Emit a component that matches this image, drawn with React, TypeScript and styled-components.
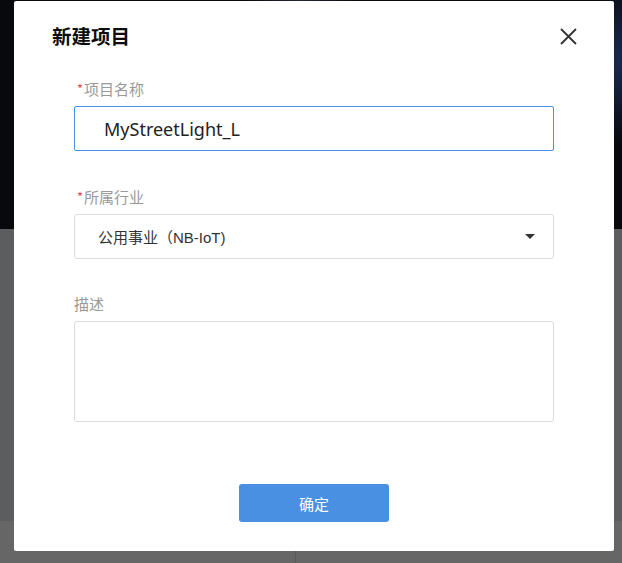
import React from "react";
import styled, { createGlobalStyle } from "styled-components";

const Global = createGlobalStyle`
  html, body { margin: 0; padding: 0; }
  body {
    width: 622px;
    height: 563px;
    overflow: hidden;
    font-family: "Noto Sans", "Noto Sans CJK SC", sans-serif;
  }
  * { box-sizing: border-box; }
`;

const Page = styled.div`
  position: relative;
  width: 622px;
  height: 563px;
  display: flex;
  flex-direction: column;
  background: #5c5d5f;
`;

const Banner = styled.div`
  height: 229px;
  background:
    radial-gradient(ellipse 40px 120px at 618px 60px, rgba(40, 70, 140, 0.55), transparent 70%),
    radial-gradient(ellipse 80px 40px at 300px 4px, rgba(90, 100, 120, 0.35), transparent 70%),
    #07090d;
`;

const Middle = styled.div`
  flex: 1;
  background: #5c5d5f;
`;

const BottomBar = styled.div`
  height: 42px;
  display: grid;
  grid-template-columns: 296px 1fr;
  background: #666667;
`;

const BarCell = styled.div<{ $divider?: boolean }>`
  border-right: ${(p) => (p.$divider ? "1px solid #58595a" : "none")};
`;

const Modal = styled.div`
  position: absolute;
  left: 14px;
  top: 1px;
  width: 600px;
  height: 550px;
  background: #ffffff;
  border-radius: 2px;
  padding: 20px 38px 0 38px;
  display: flex;
  flex-direction: column;
`;

const Header = styled.div`
  height: 30px;
  display: flex;
  align-items: center;
  justify-content: space-between;
`;

const Title = styled.h2`
  margin: 0;
  font-family: "Noto Sans CJK SC", sans-serif;
  font-size: 19.5px;
  font-weight: 700;
  color: #0d0d0d;
  line-height: 30px;
`;

const CloseButton = styled.button`
  width: 20px;
  height: 20px;
  padding: 0;
  margin-right: -2px;
  border: none;
  background: transparent;
  display: flex;
  align-items: center;
  justify-content: center;
  cursor: pointer;
`;

const Form = styled.div`
  margin-top: 28px;
  padding: 0 22px;
  display: flex;
  flex-direction: column;
`;

const Label = styled.div<{ $gap?: number; $indent?: number }>`
  margin-top: ${(p) => p.$gap ?? 0}px;
  margin-bottom: 7px;
  padding-left: ${(p) => p.$indent ?? 3}px;
  height: 20px;
  line-height: 20px;
  font-family: "Noto Sans CJK SC", sans-serif;
  font-size: 15px;
  color: #999;
`;

const Star = styled.span`
  color: #e5484d;
  font-size: 13px;
  margin-right: 1px;
  vertical-align: 1px;
`;

const TextInput = styled.div`
  height: 45px;
  border: 1px solid #4a90e2;
  border-radius: 2px;
  padding-left: 29px;
  display: flex;
  align-items: center;
  font-family: "Noto Sans", "Noto Sans CJK SC", sans-serif;
  font-size: 18px;
  color: #222;
`;

const Select = styled.div`
  height: 45px;
  border: 1px solid #dcdcdc;
  border-radius: 3px;
  padding: 0 18px 0 23px;
  display: flex;
  align-items: center;
  justify-content: space-between;
  font-family: "Liberation Sans", "Noto Sans CJK SC", sans-serif;
  font-size: 15px;
  color: #333;
`;

const Caret = styled.span`
  width: 0;
  height: 0;
  border-left: 5px solid transparent;
  border-right: 5px solid transparent;
  border-top: 5px solid #333;
`;

const TextArea = styled.div`
  height: 101px;
  border: 1px solid #dcdcdc;
  border-radius: 3px;
`;

const Footer = styled.div`
  margin-top: 62px;
  display: flex;
  justify-content: center;
`;

const Confirm = styled.button`
  width: 150px;
  height: 38px;
  border: none;
  border-radius: 3px;
  background: #4a90e2;
  color: #fff;
  font-family: "Noto Sans CJK SC", sans-serif;
  font-size: 15px;
  cursor: pointer;
`;

export default function App() {
  return (
    <>
      <Global />
      <Page>
        <Banner />
        <Middle />
        <BottomBar>
          <BarCell $divider />
          <BarCell />
        </BottomBar>
        <Modal>
          <Header>
            <Title>新建项目</Title>
            <CloseButton aria-label="close">
              <svg width="17" height="17" viewBox="0 0 17 17">
                <path d="M1 1 L16 16 M16 1 L1 16" stroke="#333" strokeWidth="1.8" />
              </svg>
            </CloseButton>
          </Header>
          <Form>
            <Label>
              <Star>*</Star>项目名称
            </Label>
            <TextInput>MyStreetLight_L</TextInput>
            <Label $gap={36}>
              <Star>*</Star>所属行业
            </Label>
            <Select>
              <span>公用事业（NB-IoT)</span>
              <Caret />
            </Select>
            <Label $gap={35} $indent={0}>描述</Label>
            <TextArea />
          </Form>
          <Footer>
            <Confirm>确定</Confirm>
          </Footer>
        </Modal>
      </Page>
    </>
  );
}
